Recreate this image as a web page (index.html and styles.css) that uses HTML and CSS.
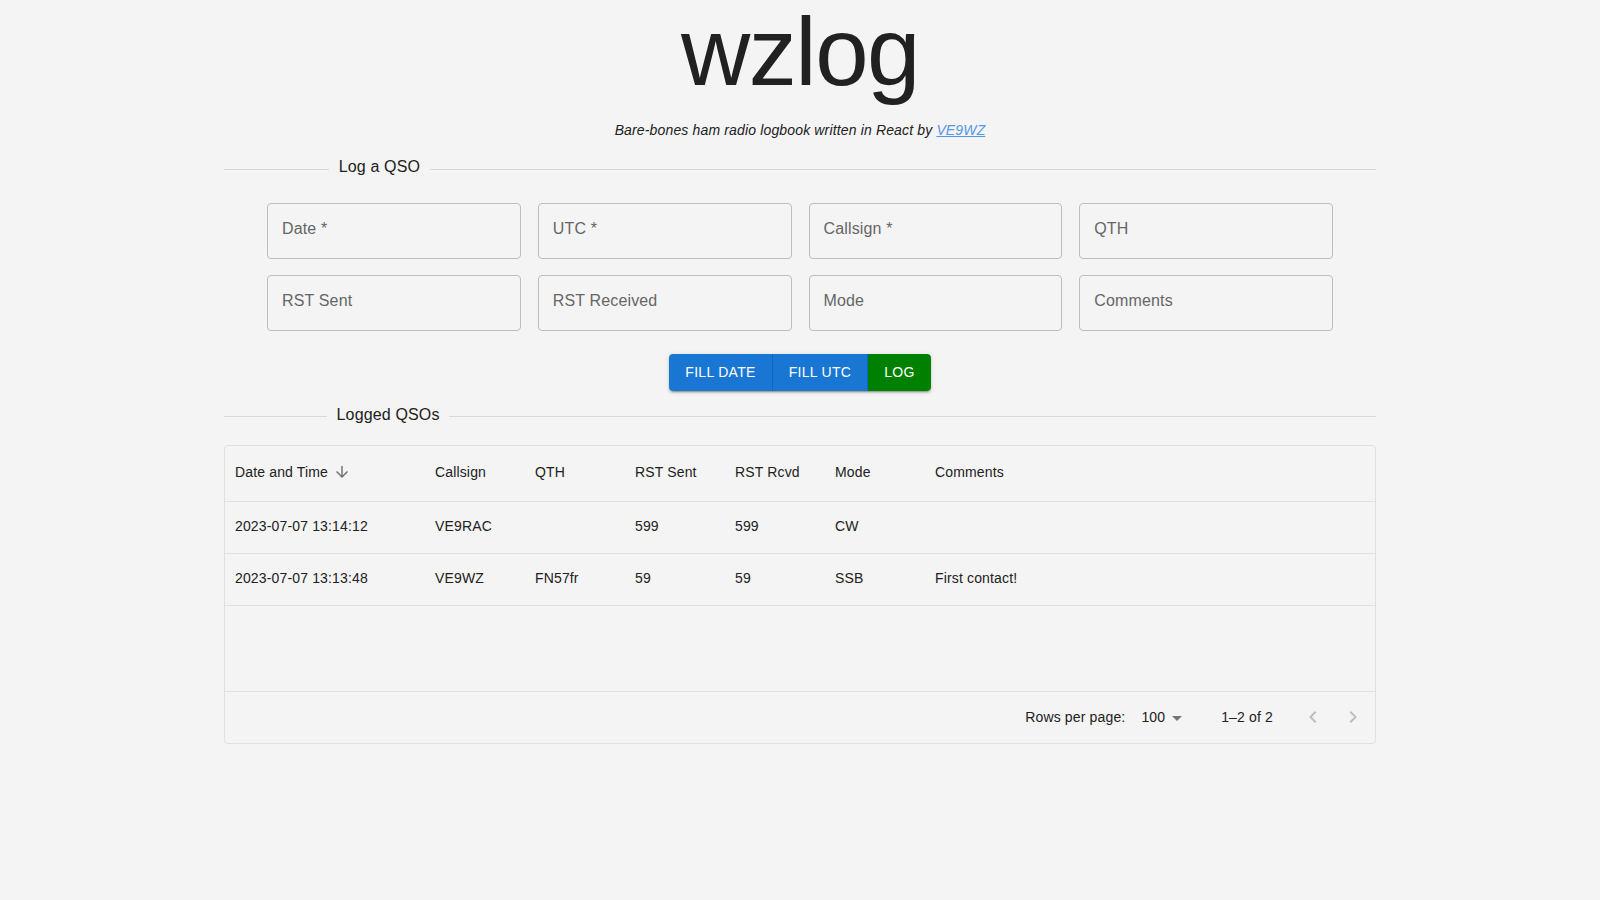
FILE: index.html
```html
<!DOCTYPE html>
<html lang="en">
<head>
<meta charset="utf-8">
<title>wzlog</title>
<link rel="stylesheet" href="styles.css">
</head>
<body>
<main class="container">
  <header class="masthead">
    <h1 class="title">wzlog</h1>
    <p class="subtitle">Bare-bones ham radio logbook written in React by <a href="#" class="link">VE9WZ</a></p>
  </header>

  <div class="divider divider-top">
    <span class="divider-line before"></span>
    <span class="divider-text">Log a QSO</span>
    <span class="divider-line after"></span>
  </div>

  <form class="fields">
    <div class="field"><span class="label">Date *</span></div>
    <div class="field"><span class="label">UTC *</span></div>
    <div class="field"><span class="label">Callsign *</span></div>
    <div class="field"><span class="label">QTH</span></div>
    <div class="field"><span class="label">RST Sent</span></div>
    <div class="field"><span class="label">RST Received</span></div>
    <div class="field"><span class="label">Mode</span></div>
    <div class="field"><span class="label">Comments</span></div>
  </form>

  <div class="actions">
    <div class="btn-group">
      <button class="btn btn-blue" type="button">Fill Date</button>
      <button class="btn btn-blue" type="button">Fill UTC</button>
      <button class="btn btn-green" type="button">Log</button>
    </div>
  </div>

  <div class="divider divider-bottom">
    <span class="divider-line before"></span>
    <span class="divider-text">Logged QSOs</span>
    <span class="divider-line after"></span>
  </div>

  <section class="grid">
    <div class="row head">
      <div class="cell c-date">Date and Time
        <span class="sort-icon"><svg viewBox="0 0 24 24" width="18" height="18"><path d="M20 12l-1.41-1.41L13 16.17V4h-2v12.17l-5.58-5.59L4 12l8 8 8-8z" fill="currentColor"/></svg></span>
      </div>
      <div class="cell c-sm">Callsign</div>
      <div class="cell c-sm">QTH</div>
      <div class="cell c-sm">RST Sent</div>
      <div class="cell c-sm">RST Rcvd</div>
      <div class="cell c-sm">Mode</div>
      <div class="cell c-flex">Comments</div>
    </div>
    <div class="row body">
      <div class="cell c-date">2023-07-07 13:14:12</div>
      <div class="cell c-sm">VE9RAC</div>
      <div class="cell c-sm"></div>
      <div class="cell c-sm">599</div>
      <div class="cell c-sm">599</div>
      <div class="cell c-sm">CW</div>
      <div class="cell c-flex"></div>
    </div>
    <div class="row body">
      <div class="cell c-date">2023-07-07 13:13:48</div>
      <div class="cell c-sm">VE9WZ</div>
      <div class="cell c-sm">FN57fr</div>
      <div class="cell c-sm">59</div>
      <div class="cell c-sm">59</div>
      <div class="cell c-sm">SSB</div>
      <div class="cell c-flex">First contact!</div>
    </div>
    <div class="filler"></div>
    <footer class="footer">
      <span class="rows-label">Rows per page:</span>
      <span class="select">100
        <svg class="select-arrow" viewBox="0 0 24 24" width="24" height="24"><path d="M7 10l5 5 5-5z" fill="currentColor"/></svg>
      </span>
      <span class="displayed">1–2 of 2</span>
      <span class="pager">
        <button class="icon-btn" type="button" aria-label="previous"><svg viewBox="0 0 24 24" width="24" height="24"><path d="M15.41 16.59 10.83 12l4.58-4.59L14 6l-6 6 6 6z" fill="currentColor"/></svg></button>
        <button class="icon-btn" type="button" aria-label="next"><svg viewBox="0 0 24 24" width="24" height="24"><path d="M8.59 16.59 13.17 12 8.59 7.41 10 6l6 6-6 6z" fill="currentColor"/></svg></button>
      </span>
    </footer>
  </section>
</main>
</body>
</html>
```

FILE: styles.css
```css
* { box-sizing: border-box; }

html, body {
  margin: 0;
  padding: 0;
  background: #f4f4f4;
  color: #212121;
  font-family: "Liberation Sans", Arial, Helvetica, sans-serif;
}

.container {
  max-width: 1200px;
  margin: 0 auto;
  padding: 0 24px;
}

.masthead {
  text-align: center;
  padding-top: 4px;
}

.title {
  margin: 0;
  font-size: 96px;
  font-weight: 300;
  line-height: 96px;
  letter-spacing: -1.5px;
  color: #212121;
}

.subtitle {
  margin: 20px 0 0;
  font-size: 14px;
  line-height: 20px;
  letter-spacing: 0.15px;
  font-style: italic;
  color: #212121;
}

.link {
  color: #5596e6;
  text-decoration: underline;
}

.divider {
  display: flex;
  align-items: center;
  height: 24px;
}

.divider-top { margin-top: 15px; }
.divider-bottom { margin-top: 12px; }

.divider-line {
  height: 0;
  border-top: 1px solid #d8d8d8;
  transform: translateY(2px);
}

.divider-line.before { flex: 0 1 10%; }
.divider-line.after { flex: 0 1 90%; }

.divider-text {
  flex: none;
  padding: 0 9.6px;
  font-size: 16px;
  line-height: 24px;
  letter-spacing: 0.15px;
  color: #212121;
  white-space: nowrap;
}

.fields {
  margin: 24px auto 0;
  width: 1066px;
  display: grid;
  grid-template-columns: repeat(4, 1fr);
  column-gap: 17px;
  row-gap: 16px;
}

.field {
  height: 56px;
  border: 1px solid #bdbdbd;
  border-radius: 4px;
  padding: 13px 14px 0;
}

.label {
  display: block;
  font-size: 16px;
  line-height: 23px;
  letter-spacing: 0.15px;
  color: #666666;
}

.actions {
  display: flex;
  justify-content: center;
  margin-top: 23px;
}

.btn-group {
  display: inline-flex;
  border-radius: 4px;
  box-shadow: 0 3px 1px -2px rgba(0,0,0,0.2), 0 2px 2px 0 rgba(0,0,0,0.14), 0 1px 5px 0 rgba(0,0,0,0.12);
}

.btn {
  border: 0;
  margin: 0;
  font-family: inherit;
  font-size: 14px;
  line-height: 24.5px;
  letter-spacing: 0.3px;
  text-transform: uppercase;
  color: #ffffff;
  padding: 6px 16px;
  min-width: 40px;
  cursor: pointer;
}

.btn-blue {
  background: #1976d2;
  border-right: 1px solid #1565c0;
}

.btn-group .btn:first-child {
  border-radius: 4px 0 0 4px;
}

.btn-green {
  background: #008000;
  border-radius: 0 4px 4px 0;
}

.grid {
  margin-top: 18px;
  border: 1px solid #e0e0e0;
  border-radius: 4px;
  font-size: 14px;
  letter-spacing: 0.15px;
  color: #212121;
}

.row {
  display: flex;
  border-bottom: 1px solid #e0e0e0;
}

.row.head { height: 56px; }
.row.body { height: 52px; }

.cell {
  display: flex;
  align-items: center;
  padding: 0 10px 2px;
  white-space: nowrap;
  overflow: hidden;
}

.c-date { width: 200px; flex: none; }
.c-sm { width: 100px; flex: none; }
.c-flex { flex: 1 1 auto; }

.sort-icon {
  display: inline-flex;
  padding: 5px;
  color: #757575;
}

.sort-icon svg { display: block; }

.filler { height: 85px; }

.footer {
  display: flex;
  align-items: center;
  justify-content: flex-end;
  height: 52px;
  border-top: 1px solid #e0e0e0;
  padding: 0 2px 1px 0;
  font-size: 14px;
  line-height: 20px;
}

.select {
  position: relative;
  display: inline-flex;
  align-items: center;
  margin-left: 8px;
  margin-right: 32px;
  padding-left: 8px;
  padding-right: 24px;
}

.select-arrow {
  position: absolute;
  right: 0;
  top: 50%;
  margin-top: -11px;
  color: #757575;
}

.pager {
  display: inline-flex;
  margin-left: 20px;
}

.icon-btn {
  border: 0;
  background: transparent;
  padding: 8px;
  width: 40px;
  height: 40px;
  color: #bdbdbd;
  display: inline-flex;
}

.icon-btn svg { display: block; }
```
